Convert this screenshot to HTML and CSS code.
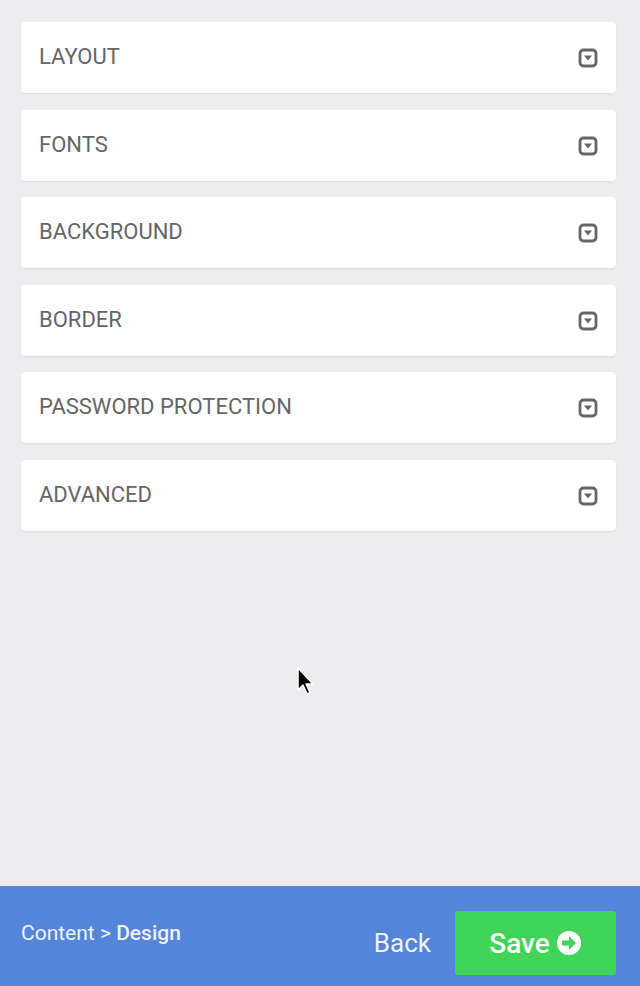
FILE: index.html
```html
<!DOCTYPE html>
<html lang="en">

    <head>
        <meta charset="UTF-8">
        <meta name="viewport" content="width=device-width, initial-scale=1.0">
        <title>Design</title>
        <link rel="stylesheet" href="styles.css">
    </head>

    <body>
        <div class="panel">
            <div class="sections">
                <div class="section"><span>Layout</span><svg class="caret" viewBox="0 0 20 20"><rect x="2" y="2" width="16" height="16" rx="3.5" fill="none" stroke="#666" stroke-width="2.8"/><path d="M6 7.5h8l-4 5z" fill="#666"/></svg></div>
                <div class="section"><span>Fonts</span><svg class="caret" viewBox="0 0 20 20"><rect x="2" y="2" width="16" height="16" rx="3.5" fill="none" stroke="#666" stroke-width="2.8"/><path d="M6 7.5h8l-4 5z" fill="#666"/></svg></div>
                <div class="section"><span>Background</span><svg class="caret" viewBox="0 0 20 20"><rect x="2" y="2" width="16" height="16" rx="3.5" fill="none" stroke="#666" stroke-width="2.8"/><path d="M6 7.5h8l-4 5z" fill="#666"/></svg></div>
                <div class="section"><span>Border</span><svg class="caret" viewBox="0 0 20 20"><rect x="2" y="2" width="16" height="16" rx="3.5" fill="none" stroke="#666" stroke-width="2.8"/><path d="M6 7.5h8l-4 5z" fill="#666"/></svg></div>
                <div class="section"><span>Password Protection</span><svg class="caret" viewBox="0 0 20 20"><rect x="2" y="2" width="16" height="16" rx="3.5" fill="none" stroke="#666" stroke-width="2.8"/><path d="M6 7.5h8l-4 5z" fill="#666"/></svg></div>
                <div class="section"><span>Advanced</span><svg class="caret" viewBox="0 0 20 20"><rect x="2" y="2" width="16" height="16" rx="3.5" fill="none" stroke="#666" stroke-width="2.8"/><path d="M6 7.5h8l-4 5z" fill="#666"/></svg></div>
            </div>

            <div class="footer">
                <div class="crumbs">Content &gt; <b>Design</b></div>
                <div class="actions">
                    <button class="back">Back</button>
                    <button class="save">Save
                        <svg class="arrow" viewBox="0 0 26 26"><circle cx="13" cy="13" r="12" fill="#fff"/><path d="M6 10.5h7V6l7 7-7 7v-4.5H6z" fill="#40d458"/></svg>
                    </button>
                </div>
            </div>
        </div>

        <!-- mouse pointer captured in the shot -->
        <svg class="pointer" viewBox="0 0 20 30"><path d="M2 2v22l5-5 4 9 3-1.5-4-8.5h7z" fill="#000" stroke="#fff" stroke-width="1.5" stroke-linejoin="round"/></svg>
    </body>

</html>
```
FILE: styles.css
```css
body {
    font-family: Roboto, "Liberation Sans", sans-serif;
    background-color: #edecee;
    margin: 0;
    padding: 0;
}

.panel {
    height: 986px;
    display: flex;
    flex-direction: column;
}

.sections {
    flex: 1;
    padding: 22px 24px 0 21px;
    display: flex;
    flex-direction: column;
    gap: 16.5px;
}

.section {
    background: #fff;
    height: 71px;
    border-radius: 4px;
    box-shadow: 0 1px 2px rgba(0, 0, 0, 0.08);
    display: flex;
    align-items: center;
    justify-content: space-between;
    padding: 0 18px 0 18px;
    font-size: 22px;
    color: #666;
    text-transform: uppercase;
}

.section span {
    margin-top: -2px;
}

.caret {
    width: 20px;
    height: 20px;
    margin-top: 1px;
}

.footer {
    height: 100px;
    background: #5585da;
    display: flex;
    align-items: center;
    justify-content: space-between;
    padding: 0 24px 0 21px;
    color: #fff;
}

.crumbs {
    font-size: 21px;
    margin-top: -6px;
    color: #eef2fb;
}

.crumbs b {
    font-weight: 500;
}

.actions {
    display: flex;
    align-items: center;
    gap: 24px;
    margin-top: 14px;
}

button {
    font-family: inherit;
    border: none;
    cursor: pointer;
    color: #fff;
}

.back {
    background: none;
    font-size: 26px;
    padding: 0;
    color: #eef2fb;
}

.save {
    background-color: #40d458;
    width: 161px;
    height: 64px;
    border-radius: 3px;
    font-size: 28px;
    font-weight: 500;
    display: flex;
    align-items: center;
    justify-content: center;
    gap: 6px;
    padding: 0;
}

.arrow {
    width: 26px;
    height: 26px;
}

.pointer {
    position: absolute;
    left: 296px;
    top: 666px;
    width: 20px;
    height: 30px;
}
```
